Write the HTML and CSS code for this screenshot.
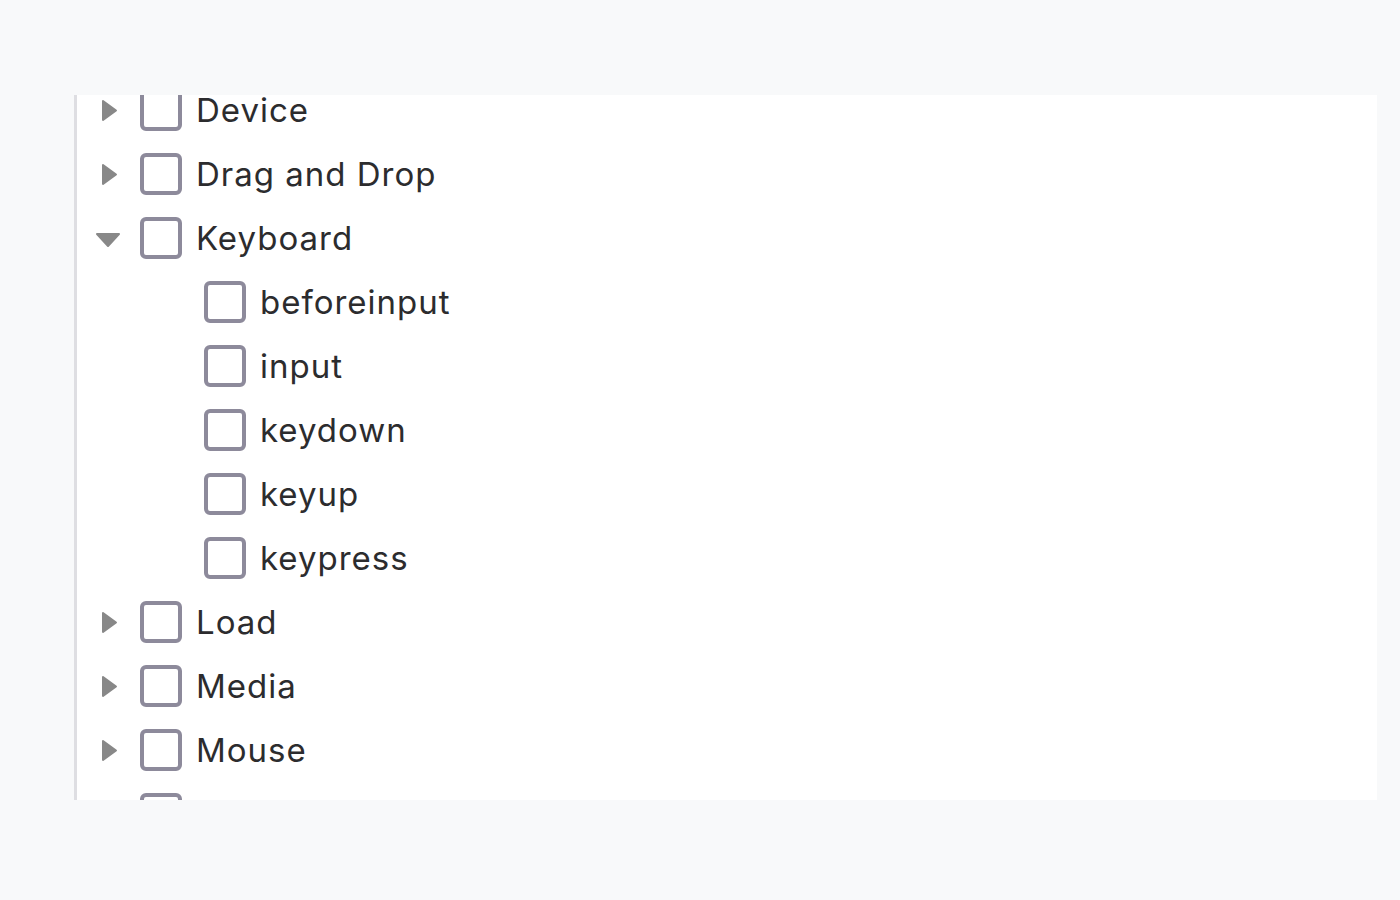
FILE: index.html
```html
<!DOCTYPE html>
<html>
<head>
<meta charset="utf-8">
<link rel="stylesheet" href="styles.css">
</head>
<body>
<div class="panel">
  <ul class="tree">
    <li class="row"><span class="toggle"><svg class="tri-r" viewBox="0 0 17 23"><path d="M2 2 L15 11.5 L2 21 Z" /></svg></span><span class="box"></span><span class="label">Device</span></li>
    <li class="row"><span class="toggle"><svg class="tri-r" viewBox="0 0 17 23"><path d="M2 2 L15 11.5 L2 21 Z" /></svg></span><span class="box"></span><span class="label">Drag and Drop</span></li>
    <li class="row"><span class="toggle"><svg class="tri-d" viewBox="0 0 26 16"><path d="M2 2 L24 2 L13 14 Z" /></svg></span><span class="box"></span><span class="label">Keyboard</span></li>
    <li class="row child"><span class="box"></span><span class="label">beforeinput</span></li>
    <li class="row child"><span class="box"></span><span class="label">input</span></li>
    <li class="row child"><span class="box"></span><span class="label">keydown</span></li>
    <li class="row child"><span class="box"></span><span class="label">keyup</span></li>
    <li class="row child"><span class="box"></span><span class="label">keypress</span></li>
    <li class="row"><span class="toggle"><svg class="tri-r" viewBox="0 0 17 23"><path d="M2 2 L15 11.5 L2 21 Z" /></svg></span><span class="box"></span><span class="label">Load</span></li>
    <li class="row"><span class="toggle"><svg class="tri-r" viewBox="0 0 17 23"><path d="M2 2 L15 11.5 L2 21 Z" /></svg></span><span class="box"></span><span class="label">Media</span></li>
    <li class="row"><span class="toggle"><svg class="tri-r" viewBox="0 0 17 23"><path d="M2 2 L15 11.5 L2 21 Z" /></svg></span><span class="box"></span><span class="label">Mouse</span></li>
    <li class="row"><span class="toggle"><svg class="tri-r" viewBox="0 0 17 23"><path d="M2 2 L15 11.5 L2 21 Z" /></svg></span><span class="box"></span><span class="label">Pointer</span></li>
  </ul>
</div>
</body>
</html>
```

FILE: styles.css
```css
html, body {
  margin: 0;
  padding: 0;
  background: #f8f9fa;
  width: 1400px;
  height: 900px;
  overflow: hidden;
}
body {
  padding-top: 95px;
  padding-left: 74px;
  box-sizing: border-box;
  font-family: Inter, "Liberation Sans", sans-serif;
}
.panel {
  width: 1303px;
  height: 705px;
  background: #ffffff;
  border-left: 3px solid #dedee2;
  box-sizing: border-box;
  overflow: hidden;
}
.tree {
  list-style: none;
  margin: -17px 0 0 0;
  padding: 0;
}
.row {
  height: 64px;
  display: flex;
  align-items: center;
}
.toggle {
  width: 63px;
  display: flex;
  justify-content: center;
  align-items: center;
  padding-left: 2px;
  box-sizing: border-box;
}
.tri-r {
  width: 17px;
  height: 23px;
  fill: #888888;
  stroke: #888888;
  stroke-width: 2;
  stroke-linejoin: round;
}
.tri-d {
  width: 26px;
  height: 16px;
  margin-left: -4px;
  margin-top: 4px;
  fill: #888888;
  stroke: #888888;
  stroke-width: 2;
  stroke-linejoin: round;
}
.child {
  padding-left: 127px;
}
.box {
  width: 42px;
  height: 42px;
  border: 4px solid #8d8a9b;
  border-radius: 6px;
  box-sizing: border-box;
  flex: none;
}
.label {
  margin-left: 14px;
  font-size: 33px;
  letter-spacing: 1px;
  color: #2c2c2e;
  line-height: 1;
  margin-top: 1px;
}
```
